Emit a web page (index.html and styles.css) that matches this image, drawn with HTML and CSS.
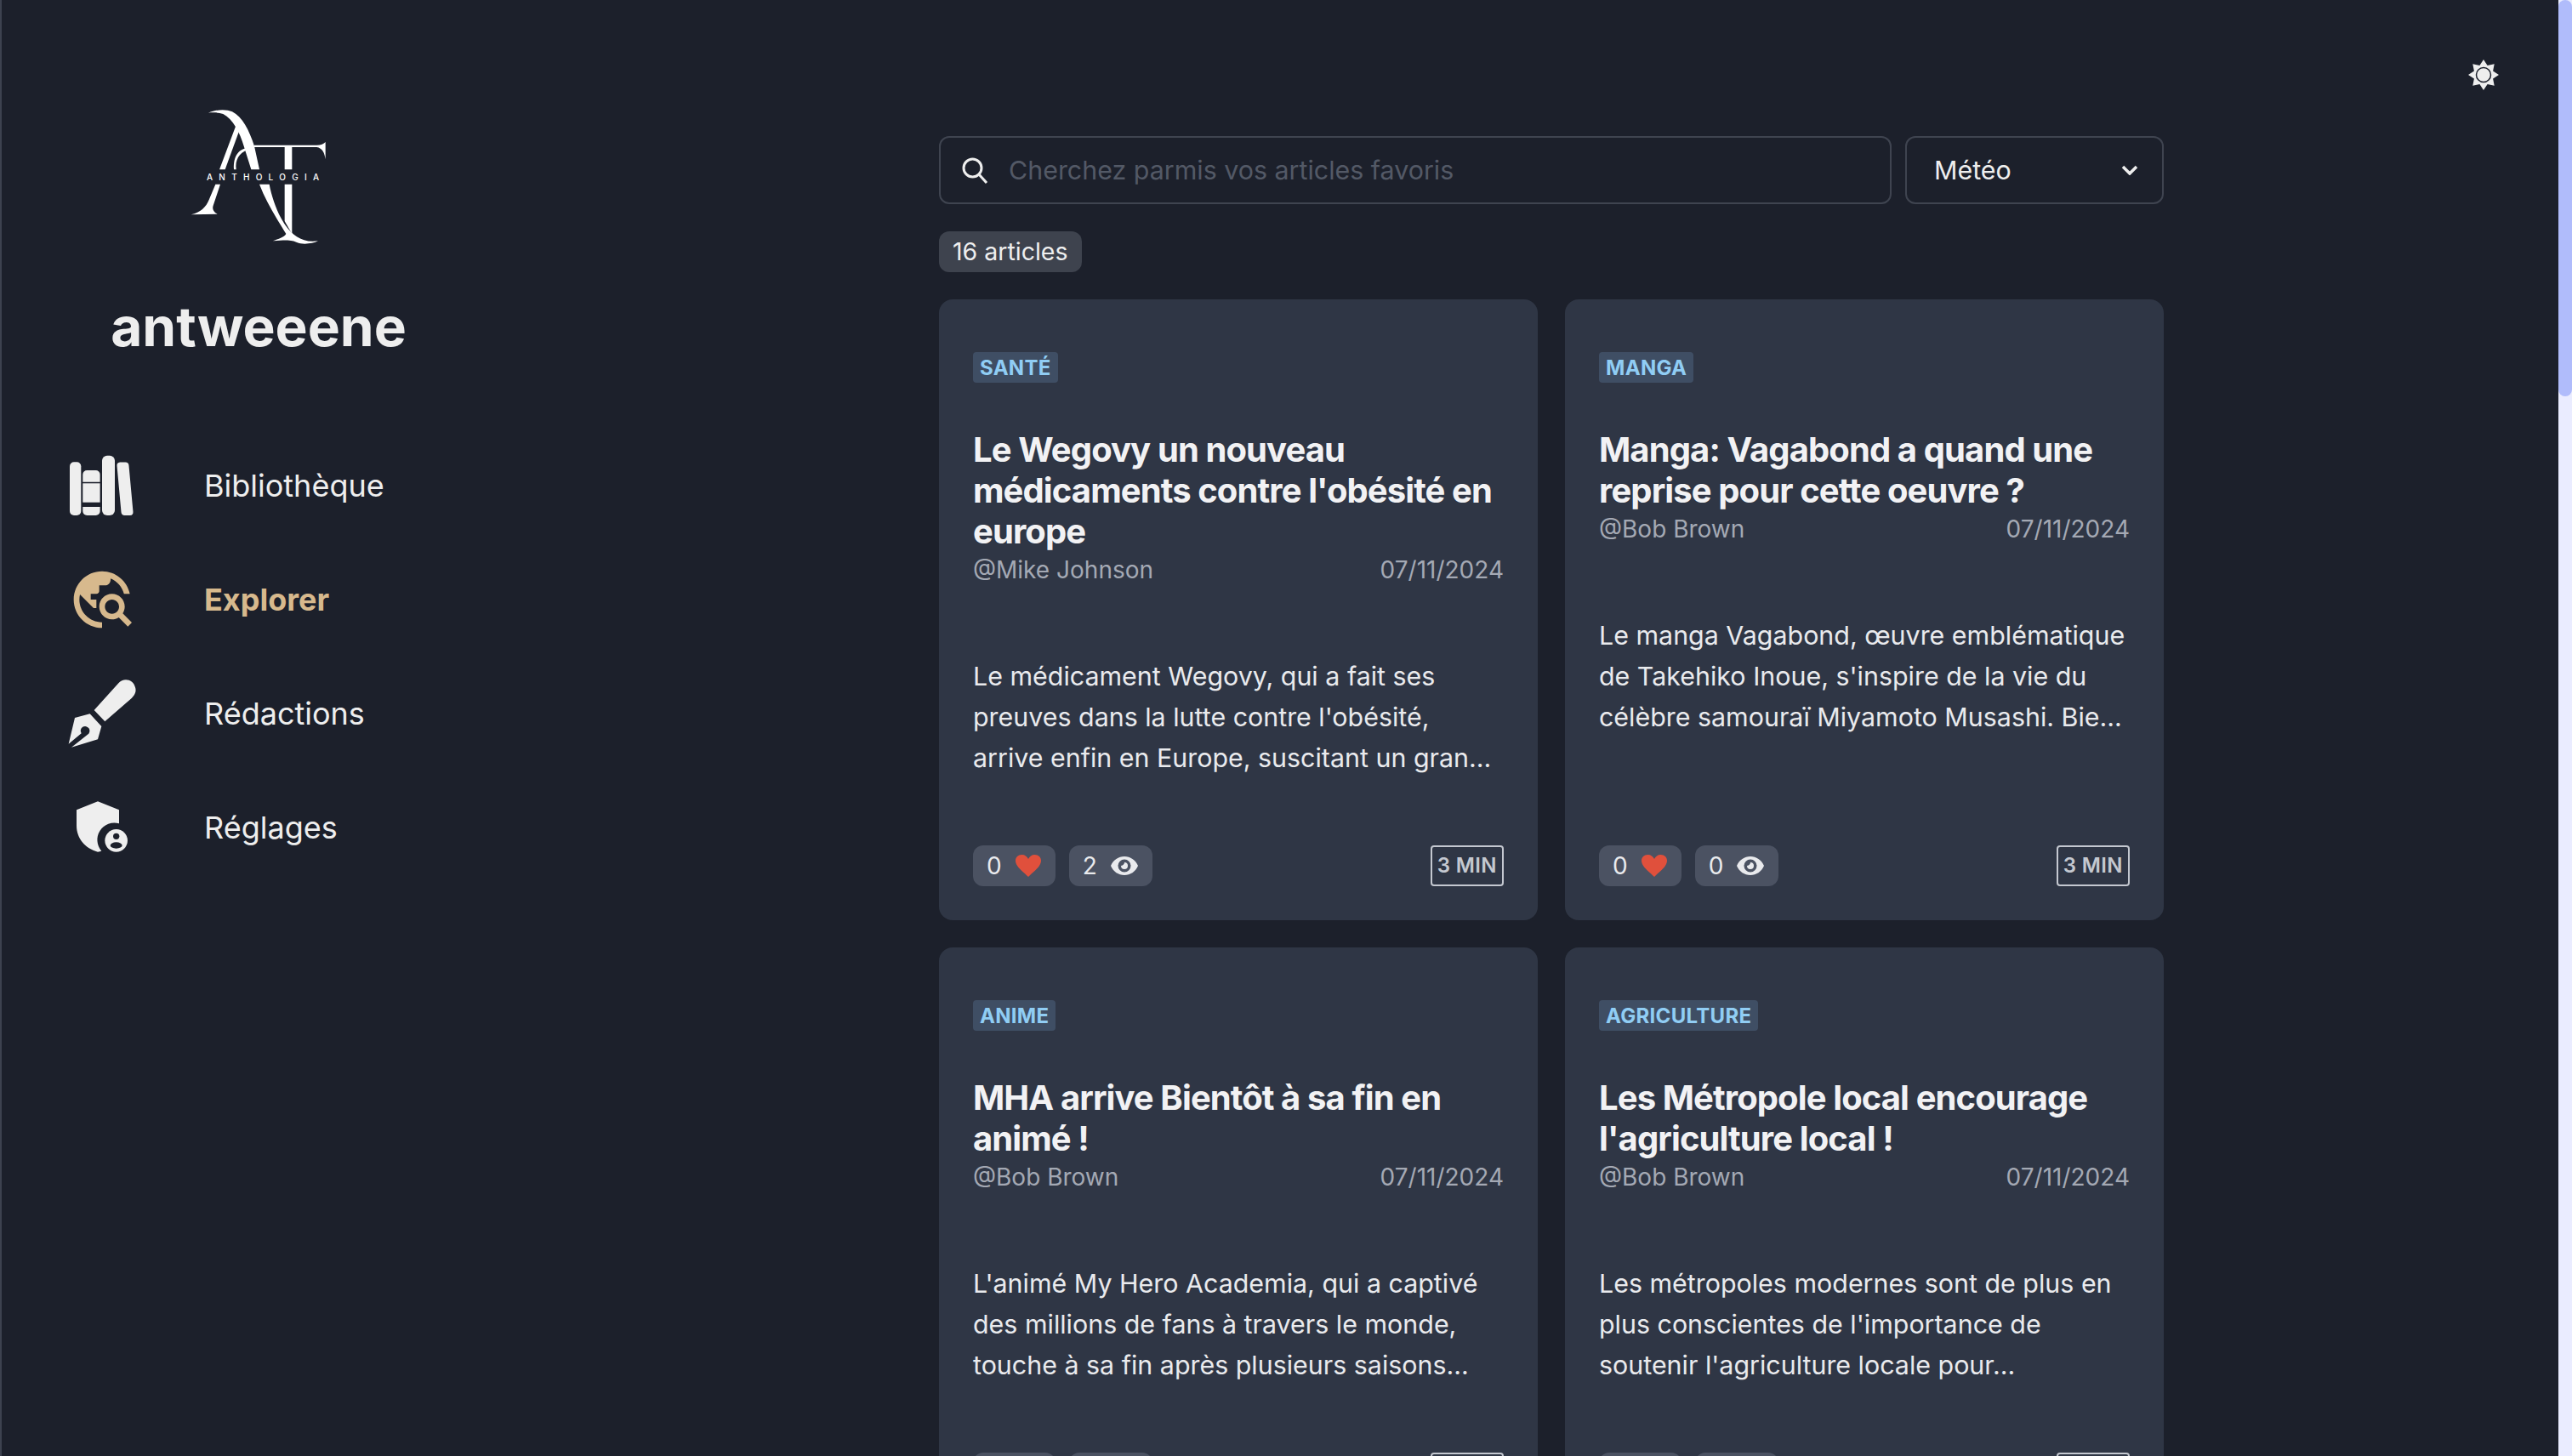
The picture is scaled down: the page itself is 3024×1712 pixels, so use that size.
FILE: index.html
```html
<!DOCTYPE html>
<html lang="fr">
<head>
    <meta charset="UTF-8">
    <title>Anthologia - Explorer</title>
    <link rel="stylesheet" href="styles.css">
</head>
<body>

    <!-- Sidebar -->
    <aside class="sidebar">
        <div class="brand">
            <svg class="logo" viewBox="15 0 600 570">
                <path d="M138 68 C165 56 200 54 222 64 C258 82 282 130 300 185 L318 268 H289 L263 185 C250 140 225 90 190 72 C172 66 152 66 138 68 Z"/>
                <path d="M240 100 L250 122 L197 268 H177 Z"/>
                <path d="M163 320 H180 L155 395 C150 410 160 420 170 425 L77 427 C110 420 130 400 140 375 Z"/>
                <path d="M318 320 H353 C362 370 385 430 410 465 C435 500 470 528 525 520 C505 530 470 534 450 525 C435 518 422 515 365 520 C385 512 405 508 412 495 C385 450 345 390 318 320 Z"/>
                <path d="M407 320 H433 V495 L407 450 Z"/>
                <path d="M300 182 H520 C535 182 545 178 551 171 V232 C548 210 540 192 520 189 H433 V268 H407 V189 H300 Z"/>
                <path d="M275 192 C250 195 225 215 228 268 H236 C232 235 245 210 277 198 Z"/>
                <text class="logo-text" x="132" y="306" textLength="396">ANTHOLOGIA</text>
            </svg>
            <h2 class="username">antweeene</h2>
        </div>

        <nav class="nav">
            <a class="nav-item">
                <svg class="nav-icon" viewBox="0 0 80 80">
                    <rect x="2" y="12.3" width="13.3" height="62.7" rx="5"/>
                    <path d="M17.3 35.7 V27 a5 5 0 0 1 5 -5 H32.6 a5 5 0 0 1 5 5 V35.7 Z"/>
                    <rect x="17.3" y="37.3" width="20.3" height="22.4"/>
                    <path d="M17.3 65 H37.6 V70 a5 5 0 0 1 -5 5 H22.3 a5 5 0 0 1 -5 -5 Z"/>
                    <rect x="40" y="4.7" width="15" height="70.3" rx="6"/>
                    <path d="M61.5 16.5 H67.5 L72.5 71 H66.5 Z" stroke="#eeeeee" stroke-width="8" stroke-linejoin="round"/>
                </svg>
                <span>Bibliothèque</span>
            </a>
            <a class="nav-item active">
                <svg class="nav-icon" viewBox="0 0 24 24">
                    <path d="M19.3 16.9c.4-.7.7-1.5.7-2.4 0-2.5-2-4.5-4.5-4.5S11 12 11 14.5s2 4.5 4.5 4.5c.9 0 1.7-.3 2.4-.7l3.2 3.2 1.4-1.4-3.2-3.2zm-3.8.1c-1.4 0-2.5-1.1-2.5-2.5s1.1-2.5 2.5-2.5 2.5 1.1 2.5 2.5-1.1 2.5-2.5 2.5zM12 20v2C6.48 22 2 17.52 2 12S6.48 2 12 2c4.84 0 8.87 3.44 9.8 8h-2.07c-.64-2.46-2.4-4.47-4.73-5.41V5c0 1.1-.9 2-2 2h-2v2c0 .55-.45 1-1 1H8v2h2v3H9l-4.79-4.79C4.08 10.79 4 11.38 4 12c0 4.41 3.59 8 8 8z"/>
                </svg>
                <span>Explorer</span>
            </a>
            <a class="nav-item">
                <svg class="nav-icon" viewBox="60 57 240 240">
                    <path d="M152 165 L238 70 C255 50 290 55 297 85 C302 100 295 112 285 122 L190 205 Z"/>
                    <path d="M137 178 L84 192 L62 284 L107 247 A16 16 0 1 1 128 252 L72 296 L165 268 L178 222 Z"/>
                </svg>
                <span>Rédactions</span>
            </a>
            <a class="nav-item">
                <svg class="nav-icon" viewBox="60 462 240 240">
                    <path d="M165 490 L240 520 V568 A60 60 0 0 0 178 665 L165 668 C120 655 90 620 90 575 V520 Z"/>
                    <circle cx="230" cy="628" r="40"/>
                    <circle class="cut" cx="230" cy="613" r="11"/>
                    <ellipse class="cut" cx="230" cy="645" rx="21" ry="11"/>
                </svg>
                <span>Réglages</span>
            </a>
        </nav>
    </aside>

    <!-- Main content -->
    <main class="content">
        <div class="filters">
            <label class="search">
                <svg class="search-icon" viewBox="0 0 32 32">
                    <circle cx="13.5" cy="13.5" r="10.5"/>
                    <path d="M21 21 L30 31"/>
                </svg>
                <input type="text" placeholder="Cherchez parmis vos articles favoris">
            </label>
            <button class="select">
                <span>Météo</span>
                <svg class="chevron" viewBox="0 0 20 12"><path d="M2 2 L10 10 L18 2"/></svg>
            </button>
        </div>

        <span class="count">16 articles</span>

        <section class="grid">
            <article class="card">
                <span class="tag">Santé</span>
                <h3 class="title">Le Wegovy un nouveau médicaments contre l'obésité en europe</h3>
                <div class="meta"><span>@Mike Johnson</span><span>07/11/2024</span></div>
                <p class="desc">Le médicament Wegovy, qui a fait ses preuves dans la lutte contre l'obésité, arrive enfin en Europe, suscitant un gran...</p>
                <div class="card-footer">
                    <span class="stat">0 <svg class="heart" viewBox="0 0 30 26"><use href="#heart"/></svg></span>
                    <span class="stat">2 <svg class="eye" viewBox="0 0 32 24"><use href="#eye"/></svg></span>
                    <span class="time">3 MIN</span>
                </div>
            </article>

            <article class="card">
                <span class="tag">Manga</span>
                <h3 class="title">Manga: Vagabond a quand une reprise pour cette oeuvre ?</h3>
                <div class="meta"><span>@Bob Brown</span><span>07/11/2024</span></div>
                <p class="desc">Le manga Vagabond, œuvre emblématique de Takehiko Inoue, s'inspire de la vie du célèbre samouraï Miyamoto Musashi. Bie...</p>
                <div class="card-footer">
                    <span class="stat">0 <svg class="heart" viewBox="0 0 30 26"><use href="#heart"/></svg></span>
                    <span class="stat">0 <svg class="eye" viewBox="0 0 32 24"><use href="#eye"/></svg></span>
                    <span class="time">3 MIN</span>
                </div>
            </article>

            <article class="card">
                <span class="tag">Anime</span>
                <h3 class="title">MHA arrive Bientôt à sa fin en animé !</h3>
                <div class="meta"><span>@Bob Brown</span><span>07/11/2024</span></div>
                <p class="desc">L'animé My Hero Academia, qui a captivé des millions de fans à travers le monde, touche à sa fin après plusieurs saisons...</p>
                <div class="card-footer">
                    <span class="stat">0 <svg class="heart" viewBox="0 0 30 26"><use href="#heart"/></svg></span>
                    <span class="stat">0 <svg class="eye" viewBox="0 0 32 24"><use href="#eye"/></svg></span>
                    <span class="time">3 MIN</span>
                </div>
            </article>

            <article class="card">
                <span class="tag">Agriculture</span>
                <h3 class="title">Les Métropole local encourage l'agriculture local !</h3>
                <div class="meta"><span>@Bob Brown</span><span>07/11/2024</span></div>
                <p class="desc">Les métropoles modernes sont de plus en plus conscientes de l'importance de soutenir l'agriculture locale pour...</p>
                <div class="card-footer">
                    <span class="stat">0 <svg class="heart" viewBox="0 0 30 26"><use href="#heart"/></svg></span>
                    <span class="stat">0 <svg class="eye" viewBox="0 0 32 24"><use href="#eye"/></svg></span>
                    <span class="time">3 MIN</span>
                </div>
            </article>
        </section>

        <!-- Theme toggle -->
        <button class="theme-toggle">
            <svg viewBox="-18 -18 36 36">
                <path d="M0 -18 L4.6 -11.1 L12.7 -12.7 L11.1 -4.6 L18 0 L11.1 4.6 L12.7 12.7 L4.6 11.1 L0 18 L-4.6 11.1 L-12.7 12.7 L-11.1 4.6 L-18 0 L-11.1 -4.6 L-12.7 -12.7 L-4.6 -11.1 Z"/>
                <circle class="sun-core" r="8.5"/>
            </svg>
        </button>
    </main>

    <!-- Page scrollbar -->
    <div class="scrollbar"><div class="scrollbar-thumb"></div></div>

    <!-- Shared card icons -->
    <svg class="sprites">
        <symbol id="heart" viewBox="0 0 30 26">
            <path d="M15 26 C9 20 0 14 0 7 C0 3 3 0 7.500 0 C11 0 13.500 2 15 5 C16.500 2 19 0 22.500 0 C27 0 30 3 30 7 C30 14 21 20 15 26 Z"/>
        </symbol>
        <symbol id="eye" viewBox="0 0 32 24">
            <path fill-rule="evenodd" d="M0 12 C3 5 9 1 16 1 C23 1 29 5 32 12 C29 19 23 23 16 23 C9 23 3 19 0 12 Z M16 4.500 A7.500 7.500 0 1 0 16 19.500 A7.500 7.500 0 1 0 16 4.500 Z M16 8 A4 4 0 0 1 20 12 A4 4 0 0 1 12 12 C13.500 12 16 10.500 16 8 Z"/>
        </symbol>
    </svg>

</body>
</html>
```

FILE: styles.css
```css
/* General styling */
* {
    box-sizing: border-box;
}

html, body {
    height: 100%;
    margin: 0;
}

body {
    display: flex;
    height: 1712px;
    overflow: hidden;
    background-color: #1c202b;
    border-left: 2px solid #3d424f;
    color: #eeeeee;
    font-family: Inter, "Noto Sans", sans-serif;
}

/* Sidebar */
.sidebar {
    flex: 0 0 1102px;
    padding-top: 110px;
}

.brand {
    display: flex;
    flex-direction: column;
    align-items: center;
    width: 604px;
}

.logo {
    width: 200px;
    height: 190px;
    fill: #ffffff;
}

.logo-text {
    font-size: 30px;
    font-weight: 500;
    font-family: Inter, sans-serif;
}

.username {
    margin: 38px 0 0;
    font-size: 64px;
    font-weight: 700;
    line-height: 92px;
}

.nav {
    display: flex;
    flex-direction: column;
    gap: 54px;
    margin-top: 101px;
    padding-left: 78px;
}

.nav-item {
    display: flex;
    align-items: center;
    gap: 80px;
    height: 80px;
    font-size: 36px;
    color: #eeeeee;
}

.nav-item.active {
    color: #d7b98d;
    font-weight: 700;
}

.nav-icon {
    flex: none;
    width: 80px;
    height: 80px;
    overflow: visible;
    fill: currentColor;
}

.nav-icon .cut {
    fill: #1c202b;
}

/* Main column */
.content {
    flex: 0 0 1440px;
    padding-top: 160px;
}

.filters {
    display: flex;
    gap: 16px;
}

.search {
    display: flex;
    align-items: center;
    flex: 1;
    gap: 24px;
    height: 80px;
    padding: 0 24px;
    border: 2px solid #3f4450;
    border-radius: 12px;
}

.search-icon {
    flex: none;
    width: 32px;
    height: 32px;
    fill: none;
    stroke: #eeeeee;
    stroke-width: 3;
}

.search input {
    flex: 1;
    padding: 0;
    border: 0;
    outline: 0;
    background: transparent;
    color: #eeeeee;
    font-family: inherit;
    font-size: 30.4px;
}

.search input::placeholder {
    color: #535966;
    opacity: 1;
}

.select {
    display: flex;
    align-items: center;
    justify-content: space-between;
    flex: 0 0 304px;
    height: 80px;
    padding: 0 28px 0 32px;
    border: 2px solid #3f4450;
    border-radius: 12px;
    background: transparent;
    color: #eeeeee;
    font-family: inherit;
    font-size: 30.4px;
}

.chevron {
    width: 20px;
    height: 12px;
    fill: none;
    stroke: #eeeeee;
    stroke-width: 3.5;
}

.count {
    display: inline-block;
    margin-top: 32px;
    padding: 0 16px;
    border-radius: 12px;
    background-color: #3e434e;
    font-size: 28.5px;
    line-height: 48px;
}

/* Article cards */
.grid {
    display: grid;
    grid-template-columns: 1fr 1fr;
    gap: 32px;
    margin-top: 32px;
}

.card {
    display: flex;
    flex-direction: column;
    align-items: flex-start;
    padding: 62px 40px 40px;
    border-radius: 16px;
    background-color: #2f3645;
}

.tag {
    padding: 1px 8px 0;
    border-radius: 4px;
    background-color: #3f4e64;
    color: #90cdf4;
    font-size: 24px;
    font-weight: 700;
    letter-spacing: 0.3px;
    line-height: 35px;
    text-transform: uppercase;
}

.title {
    margin: 55px 0 0;
    font-size: 40px;
    font-weight: 700;
    letter-spacing: -0.9px;
    line-height: 48px;
    color: #f2f2f4;
}

.meta {
    display: flex;
    justify-content: space-between;
    width: 100%;
    color: #a4a9b4;
    font-size: 28px;
    line-height: 42px;
}

.desc {
    margin: 80px 0 0;
    font-size: 30.4px;
    line-height: 48px;
    color: #e9eaed;
}

.card-footer {
    display: flex;
    align-items: center;
    gap: 16px;
    width: 100%;
    margin-top: auto;
    padding-top: 79px;
}

.stat {
    display: flex;
    align-items: center;
    gap: 16px;
    height: 48px;
    padding: 0 17px 0 16px;
    border-radius: 12px;
    background-color: #4b5262;
    font-size: 28px;
    color: #e9eaed;
}

.heart {
    width: 30px;
    height: 26px;
    fill: #e0503c;
}

.eye {
    width: 32px;
    height: 24px;
    fill: #e9eaed;
}

.time {
    margin-left: auto;
    padding: 0 6px;
    border: 2px solid #c4c8d0;
    border-radius: 4px;
    color: #c4c8d0;
    font-size: 24px;
    font-weight: 600;
    letter-spacing: 0.4px;
    line-height: 44px;
}

/* Theme toggle */
.theme-toggle {
    position: absolute;
    top: 70px;
    left: 2902px;
    width: 36px;
    height: 36px;
    padding: 0;
    border: 0;
    background: none;
}

.theme-toggle svg {
    display: block;
    width: 36px;
    height: 36px;
    fill: #eeeeee;
}

.sun-core {
    stroke: #1c202b;
    stroke-width: 1.5;
}

/* Scrollbar */
.scrollbar {
    flex: none;
    width: 16px;
    height: 100%;
    margin-left: auto;
    background-color: #eaecff;
}

.scrollbar-thumb {
    height: 466px;
    border-radius: 8px;
    background-color: #b0bcfb;
}

.sprites {
    display: none;
}
```
